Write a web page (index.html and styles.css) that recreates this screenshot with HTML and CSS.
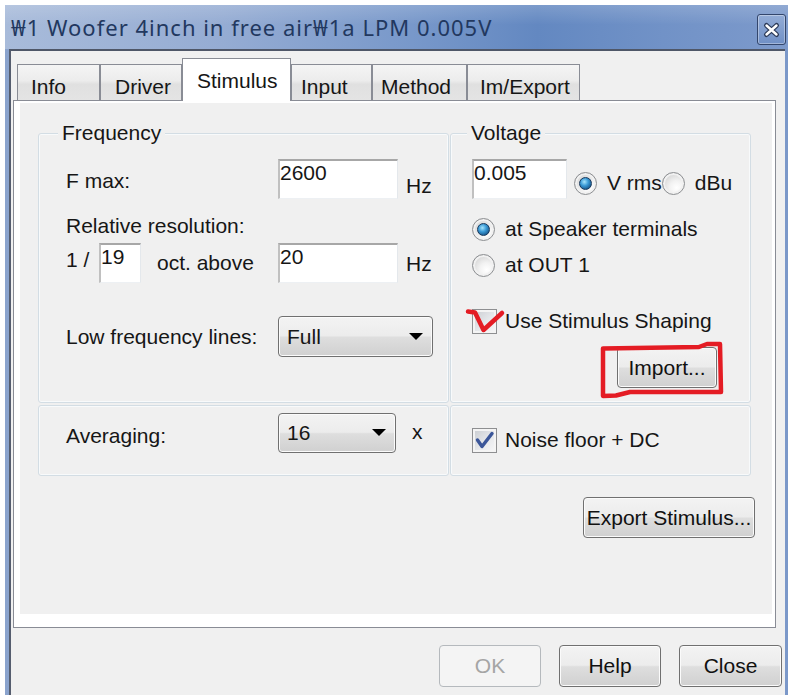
FILE: index.html
```html
<!DOCTYPE html>
<html lang="en">
<head>
<meta charset="utf-8">
<title>Stimulus</title>
<link rel="stylesheet" href="styles.css">
</head>
<body>
<div class="window">
  <header class="titlebar">
    <span class="title">₩1 Woofer 4inch in free air₩1a LPM 0.005V</span>
    <span class="close-btn">
      <svg width="27" height="29" viewBox="0 0 27 29">
        <path d="M8.5 10.5 L18.5 19.5 M18.5 10.5 L8.5 19.5" stroke="#2c3a58" stroke-width="5" stroke-linecap="round" fill="none"/>
        <path d="M8.5 10.5 L18.5 19.5 M18.5 10.5 L8.5 19.5" stroke="#ffffff" stroke-width="2.4" stroke-linecap="round" fill="none"/>
      </svg>
    </span>
  </header>

  <div class="client">
    <nav class="tabs">
      <div class="tab tab-info">Info</div>
      <div class="tab tab-driver">Driver</div>
      <div class="tab tab-stimulus active">Stimulus</div>
      <div class="tab tab-input">Input</div>
      <div class="tab tab-method">Method</div>
      <div class="tab tab-export">Im/Export</div>
    </nav>

    <section class="panel">
      <div class="page">
        <div class="groups">
          <div class="group freq">
            <div class="group-title">Frequency</div>
            <div class="row row-fmax">
              <span class="lbl lbl-wide lbl-fmax">F max:</span>
              <span class="edit edit-wide">2600</span>
              <span class="unit unit-1">Hz</span>
            </div>
            <div class="lbl lbl-rel">Relative resolution:</div>
            <div class="row row-res">
              <span class="lbl lbl-one">1 /</span>
              <span class="edit edit-small">19</span>
              <span class="lbl lbl-oct">oct. above</span>
              <span class="edit edit-wide">20</span>
              <span class="unit unit-2">Hz</span>
            </div>
            <div class="row row-lf">
              <span class="lbl lbl-wide">Low frequency lines:</span>
              <span class="combo combo-lf">
                <span>Full</span>
                <svg class="arrow" width="14" height="8" viewBox="0 0 14 8"><polygon points="0,0 14,0 7,7" fill="#000"/></svg>
              </span>
            </div>
          </div>

          <div class="group volt">
            <div class="group-title">Voltage</div>
            <div class="row row-v1">
              <span class="edit edit-volt">0.005</span>
              <span class="opts">
                <span class="radio on"></span><span class="opt-text vrms">V rms</span>
                <span class="radio"></span><span class="opt-text dbu">dBu</span>
              </span>
            </div>
            <div class="choice choice-spk"><span class="radio on"></span><span class="opt-text">at Speaker terminals</span></div>
            <div class="choice choice-out"><span class="radio"></span><span class="opt-text">at OUT 1</span></div>
            <div class="choice choice-shape"><span class="check"></span><span class="opt-text">Use Stimulus Shaping</span></div>
            <div class="row row-import"><button class="btn btn-import">Import...</button></div>
          </div>

          <div class="group avg">
            <span class="lbl lbl-wide lbl-avg">Averaging:</span>
            <span class="combo combo-avg">
              <span>16</span>
              <svg class="arrow" width="14" height="8" viewBox="0 0 14 8"><polygon points="0,0 14,0 7,7" fill="#000"/></svg>
            </span>
            <span class="lbl lbl-x">x</span>
          </div>

          <div class="group noise">
            <div class="choice choice-noise">
              <span class="check on">
                <svg width="23" height="23" viewBox="0 0 23 23"><path d="M4.5 11 L9 17.5 L19 4.5" stroke="#3b5699" stroke-width="3.4" stroke-linecap="round" stroke-linejoin="round" fill="none"/></svg>
              </span>
              <span class="opt-text">Noise floor + DC</span>
            </div>
          </div>
        </div>

        <div class="export-row"><button class="btn btn-export">Export Stimulus...</button></div>
      </div>
    </section>

    <footer class="footer">
      <button class="btn btn-ok" disabled>OK</button>
      <button class="btn btn-help">Help</button>
      <button class="btn btn-close">Close</button>
    </footer>
  </div>
</div>

<!-- hand-drawn red marks over the shaping checkbox and the Import button -->
<svg class="marks" width="788" height="695" viewBox="0 0 788 695">
  <path d="M468 311.5 L475 312.5 L483.5 330 L502 313" stroke="#e41c24" stroke-width="4.5" stroke-linecap="round" stroke-linejoin="round" fill="none"/>
  <path d="M603 396 L603 348.5 L699 347 L707 344 L720 344 L721 392 L630 392 L616 395.5 Z" stroke="#e41c24" stroke-width="4.5" stroke-linejoin="round" fill="none"/>
</svg>
</body>
</html>
```

FILE: styles.css
```css
* { box-sizing: border-box; }

html, body { margin: 0; padding: 0; }

body {
  width: 788px;
  height: 695px;
  overflow: hidden;
  position: relative;
  background: #ffffff;
  font-family: "Liberation Sans", Arial, sans-serif;
  font-size: 21px;
  color: #161616;
}

/* ---- window frame ---- */
.window {
  margin: 5px 0 0 5px;
  height: 690px;
  display: flex;
  flex-direction: column;
  background: linear-gradient(90deg, #8aa3cd, #7b98c9);
}

.titlebar {
  height: 44px;
  flex: none;
  display: flex;
  align-items: flex-start;
  justify-content: space-between;
  padding-left: 6px;
  background:
    linear-gradient(rgba(255,255,255,0.16), rgba(255,255,255,0) 45%),
    linear-gradient(90deg, #a8bbda 0%, #95acd3 28%, #7898ca 52%, #6388c1 68%, #7192c7 84%, #7d9acb 100%);
}

.title {
  margin-top: 7px;
  font-family: "Noto Sans", "DejaVu Sans", sans-serif;
  font-size: 22px;
  letter-spacing: 1px;
  line-height: 30px;
  color: #22385f;
  white-space: nowrap;
}

.close-btn {
  margin: 9px 2px 0 0;
  width: 29px;
  height: 31px;
  border: 1px solid #33466c;
  border-radius: 3px;
  box-shadow: inset 0 0 0 1px rgba(255,255,255,0.35);
  background: linear-gradient(#93acd6, #7090c6);
  display: flex;
}

.client {
  flex: 1;
  margin: 0 3px 0 4px;
  border-left: 2px solid #555d6e;
  border-top: 2px solid #4f5768;
  background: #f0f0f0;
  display: flex;
  flex-direction: column;
}

/* ---- tab strip ---- */
.tabs {
  height: 49px;
  flex: none;
  display: flex;
  align-items: flex-end;
  padding-left: 6px;
}

.tab {
  height: 36px;
  border: 1px solid #898c95;
  border-bottom: none;
  padding: 10px 0 0 13px;
  line-height: 24px;
  white-space: nowrap;
  background: linear-gradient(#f4f4f4 0%, #ececec 45%, #e0e0e0 55%, #e4e4e4 100%);
}

.tab-info { width: 83px; }
.tab-driver { width: 82px; padding-left: 14px; }
.tab-stimulus { width: 109px; padding-left: 14px; }
.tab-input { width: 81px; padding-left: 9px; }
.tab-method { width: 95px; padding-left: 8px; }
.tab-export { width: 113px; padding-left: 12px; }

.tab.active {
  height: 43px;
  margin-bottom: -1px;
  background: #ffffff;
  position: relative;
  z-index: 2;
}

/* ---- tab page ---- */
.panel {
  margin-left: 2px;
  width: 763px;
  height: 528px;
  flex: none;
  border: 1px solid #898c95;
  background: #ffffff;
  padding: 2px 3px 13px 6px;
}

.page {
  height: 100%;
  background: #f0f0f0;
  padding: 30px 17px 0 18px;
}

.groups {
  display: grid;
  grid-template-columns: 411px 301px;
  grid-template-rows: 270px 71px;
  column-gap: 1px;
  row-gap: 2px;
}

.group {
  border: 1px solid #d3dde4;
  border-radius: 3px;
  box-shadow: inset 0 0 0 1px #f8fafb;
}

.group-title {
  margin-top: -12px;
  padding: 0 4px;
  width: fit-content;
  line-height: 22px;
  background: #f0f0f0;
}

.freq .group-title { margin-left: -8px; }
.volt .group-title { margin-left: -5px; }

.lbl { line-height: 24px; white-space: nowrap; }

.row { display: flex; align-items: flex-start; }

/* frequency group */
.freq { padding-left: 27px; }

.lbl-wide { width: 212px; flex: none; }
.lbl-fmax { margin-top: 10px; }

.row-fmax { margin-top: 15px; }
.unit { line-height: 24px; margin-left: 8px; }
.unit-1 { margin-top: 15px; }
.unit-2 { margin-top: 9px; }

.lbl-rel { margin-top: 15px; }

.row-res { margin-top: 5px; }
.lbl-one { width: 33px; margin-top: 5px; }
.lbl-oct { width: 121px; margin: 8px 0 0 16px; }

.row-lf { margin-top: 33px; align-items: center; }

/* edit boxes */
.edit {
  flex: none;
  height: 40px;
  background: #ffffff;
  border-top: 2px solid #a7a7a7;
  border-left: 2px solid #c0c0c0;
  border-right: 1px solid #e4e8ec;
  border-bottom: 1px solid #edf0f3;
  line-height: 24px;
  padding: 0;
}

.edit-wide { width: 120px; }
.edit-small { width: 42px; }
.edit-volt { width: 95px; }

/* drop-down lists */
.combo {
  flex: none;
  display: flex;
  align-items: center;
  justify-content: space-between;
  padding: 0 9px 0 8px;
  border: 1px solid #707070;
  border-radius: 4px;
  background: linear-gradient(#f3f3f3 0%, #ececec 48%, #dedede 52%, #d0d0d0 100%);
  box-shadow: inset 0 0 0 1px #fbfbfb;
  line-height: 24px;
}

.combo-lf { width: 155px; height: 41px; }
.combo-avg { width: 118px; height: 40px; margin-top: 7px; }

/* voltage group */
.volt { padding-left: 21px; }

.row-v1 { margin-top: 15px; }

.opts {
  display: flex;
  align-items: center;
  height: 26px;
  margin-top: 11px;
  white-space: nowrap;
}

.opts .radio:first-child { margin-left: 7px; }
.opt-text { line-height: 24px; white-space: nowrap; }
.opts .vrms { margin-left: 11px; }
.opts .dbu { margin-left: 12px; }

.choice {
  display: flex;
  align-items: center;
  height: 26px;
}

.radio + .opt-text { margin-left: 10px; }
.check + .opt-text { margin-left: 8px; }

.choice-spk { margin-top: 17px; }
.choice-out { margin-top: 10px; }
.choice-shape { margin-top: 30px; }

.row-import { margin-top: 13px; padding-left: 145px; }

/* radio buttons */
.radio {
  flex: none;
  width: 23px;
  height: 23px;
  border-radius: 50%;
  border: 1px solid #8d8f92;
  background: radial-gradient(circle at 65% 70%, #ffffff 0%, #f2f2f2 35%, #cfcfcf 85%);
  box-shadow: inset 0 0 0 2px #f1f1f1;
  display: flex;
  align-items: center;
  justify-content: center;
}

.radio.on::after {
  content: "";
  width: 11px;
  height: 11px;
  border-radius: 50%;
  border: 1px solid #17375a;
  background: radial-gradient(circle at 40% 35%, #a6e4fb 0%, #3a9ad6 40%, #1d5f94 75%, #143f66 100%);
}

/* check boxes */
.check {
  flex: none;
  width: 25px;
  height: 25px;
  border: 1px solid #8e8f91;
  background: linear-gradient(135deg, #c8cbd0 0%, #e6e8eb 55%, #f7f7f8 100%);
  box-shadow: inset 0 0 0 2px #f4f4f4;
  display: flex;
}

/* averaging / noise row */
.avg {
  display: flex;
  align-items: flex-start;
  padding-left: 27px;
}

.lbl-avg { margin-top: 18px; }
.lbl-x { margin: 14px 0 0 16px; }

.noise { padding-left: 21px; }
.choice-noise { margin-top: 21px; }

/* push buttons */
.btn {
  font: inherit;
  color: #111;
  border: 1px solid #707070;
  border-radius: 4px;
  background: linear-gradient(#f3f3f3 0%, #ececec 48%, #dedede 52%, #d0d0d0 100%);
  box-shadow: inset 0 0 0 1px #fbfbfb;
  padding: 0;
  line-height: 24px;
  white-space: nowrap;
}

.btn-import { width: 100px; height: 41px; }

.export-row {
  display: flex;
  justify-content: flex-end;
  margin-top: 21px;
}

.btn-export { width: 172px; height: 41px; }

.footer {
  display: flex;
  justify-content: flex-end;
  gap: 18px;
  padding: 17px 3px 0 0;
}

.footer .btn { height: 42px; width: 102px; }
.footer .btn-close { width: 103px; }

.btn-ok {
  border-color: #b5b9bd;
  background: #f4f4f4;
  box-shadow: none;
  color: #a5a5a5;
}

/* annotation layer */
.marks {
  position: absolute;
  left: 0;
  top: 0;
  pointer-events: none;
}
```
